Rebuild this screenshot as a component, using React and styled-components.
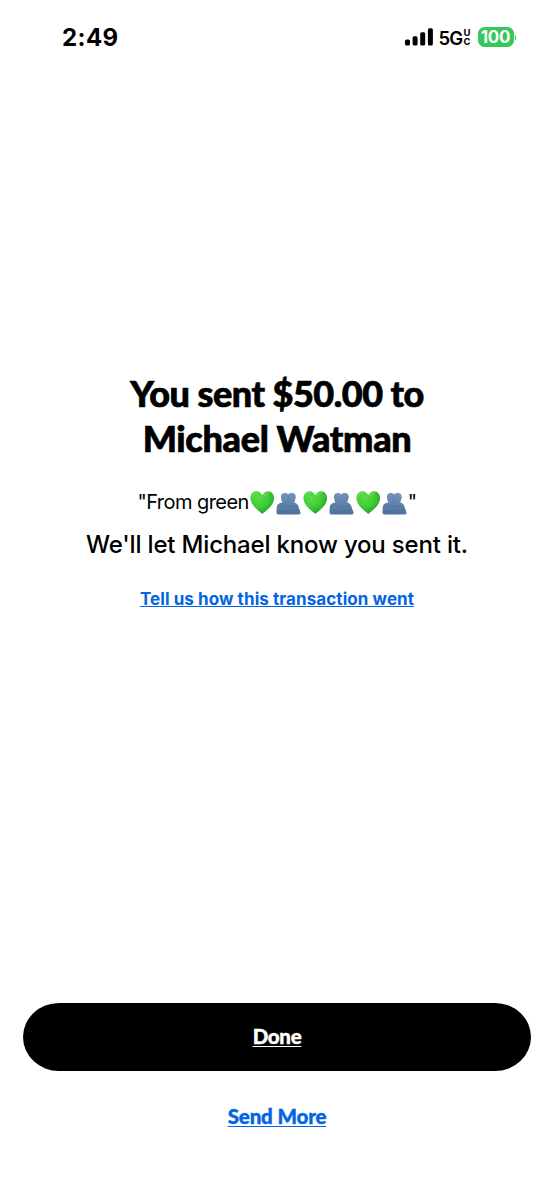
import React from 'react';
import styled, { createGlobalStyle } from 'styled-components';

const GlobalStyle = createGlobalStyle`
  * { box-sizing: border-box; }
  body { margin: 0; background: #fff; }
`;

const sans = `Inter, 'Liberation Sans', sans-serif`;
const display = `Lato, 'Liberation Sans', sans-serif`;

const Screen = styled.div`
  display: flex;
  flex-direction: column;
  width: 554px;
  height: 1199px;
  background: #fff;
  color: #000;
  font-family: ${sans};
  overflow: hidden;
`;

const StatusBar = styled.header`
  display: flex;
  align-items: center;
  justify-content: space-between;
  height: 74px;
  padding: 0 38px 0 62px;
`;

const Clock = styled.time`
  padding-top: 2px;
  font-size: 24px;
  font-weight: 700;
  line-height: 28px;
  letter-spacing: 0.4px;
`;

const Indicators = styled.div`
  display: flex;
  align-items: center;
`;

const Signal = styled.svg`
  display: block;
  margin-right: 6px;
`;

const Network = styled.span`
  width: 25px;
  padding-top: 1px;
  font-size: 18.5px;
  font-weight: 600;
  line-height: 24px;
  letter-spacing: -1px;
`;

const NetworkSuffix = styled.span`
  display: flex;
  flex-direction: column;
  width: 8px;
  margin-right: 6px;
  font-size: 9.5px;
  font-weight: 700;
  line-height: 9px;
`;

const Battery = styled.span`
  width: 36px;
  height: 20px;
  border-radius: 6.5px;
  background: #34c759;
  color: #fff;
  font-size: 17px;
  font-weight: 700;
  line-height: 20px;
  letter-spacing: -0.2px;
  text-align: center;
`;

const BatteryTip = styled.span`
  width: 1.5px;
  height: 5px;
  margin-left: 1px;
  border-radius: 0 2px 2px 0;
  background: #34c759;
`;

const Message = styled.main`
  display: flex;
  flex-direction: column;
  align-items: center;
  padding-top: 297px;
  white-space: nowrap;
`;

const Title = styled.h1`
  display: flex;
  flex-direction: column;
  align-items: center;
  margin: 0;
  font-family: ${display};
  font-size: 36px;
  font-weight: 900;
  line-height: 45px;
  -webkit-text-stroke: 0.7px currentColor;
`;

const TitleLine = styled.span`
  letter-spacing: ${(p) => p.$tracking}px;
`;

const Note = styled.p`
  display: flex;
  align-items: center;
  margin: 27px 0 0;
  font-size: 20px;
  line-height: 28px;
  letter-spacing: -0.55px;
`;

const Emoji = styled.svg`
  display: block;
  flex: none;
`;

const Detail = styled.p`
  margin: 14px 0 0;
  font-size: 24px;
  font-weight: 500;
  line-height: 30px;
  letter-spacing: -0.18px;
`;

const FeedbackLink = styled.a`
  margin-top: 27px;
  color: #0364e4;
  font-size: 17px;
  font-weight: 700;
  line-height: 24px;
  letter-spacing: 0.08px;
  text-decoration: underline;
  text-decoration-thickness: 1px;
  text-underline-offset: 1px;
  text-decoration-skip-ink: none;
`;

const Actions = styled.footer`
  display: flex;
  flex-direction: column;
  align-items: center;
  margin-top: auto;
  padding: 0 23px 67px;
`;

const Action = styled.button`
  border: 0;
  padding: 0;
  background: none;
  color: #0364e4;
  font-family: ${display};
  font-size: 20.5px;
  font-weight: 900;
  line-height: 32px;
  letter-spacing: ${(p) => p.$tracking}px;
  -webkit-text-stroke: 0.4px currentColor;
  text-decoration: underline;
  text-decoration-thickness: 1px;
  text-underline-offset: 2px;
  text-decoration-skip-ink: none;
`;

const PrimaryAction = styled(Action)`
  width: 508px;
  height: 68px;
  margin-bottom: 29px;
  padding-bottom: 2px;
  border-radius: 36px / 34px;
  background: #000;
  color: #fff;
`;

function Heart() {
  return (
    <Emoji width="26.5" height="26" viewBox="0 0 26.5 26" aria-hidden="true">
      <defs>
        <radialGradient id="heart" cx="35%" cy="28%" r="75%">
          <stop offset="0" stopColor="#5fdc4a" />
          <stop offset="0.55" stopColor="#3fcc35" />
          <stop offset="1" stopColor="#20a32a" />
        </radialGradient>
      </defs>
      <path d="M13.3 25C10.4 22.3 1.5 16.8 1.5 9C1.5 5.2 4.1 2.2 7.2 2.2C10.1 2.2 12.3 3.9 13.3 6.2C14.3 3.9 16.6 2.2 19.4 2.2C22.5 2.2 25.1 5.2 25.1 9C25.1 16.8 16.3 22.3 13.3 25Z" fill="url(#heart)" />
      <path d="M3.6 7.3C4.2 4.9 5.8 3.7 7.8 3.8M15.7 6.4C16.6 4.6 18 3.8 19.9 3.8" fill="none" stroke="#9af284" strokeWidth="1.2" strokeLinecap="round" opacity=".5" />
    </Emoji>
  );
}

function Hug() {
  return (
    <Emoji width="26.5" height="26" viewBox="0 0 26.5 26" aria-hidden="true">
      <defs>
        <linearGradient id="hug" x1="0" y1="0" x2="0" y2="1">
          <stop offset="0" stopColor="#7494bb" />
          <stop offset="1" stopColor="#4f719c" />
        </linearGradient>
      </defs>
      <path d="M6 8.5C5.6 5.6 7.2 4 9.6 4C11.3 4 12.4 4.5 13.2 5.4C14.2 4.4 15.5 3.9 17.2 4C19.9 4.2 21.2 6.2 20.6 9C20.2 11 19.8 12.2 19 13.2C21.8 14 23.3 16 23.9 19L25.4 22.9C25.8 24.6 25.1 25.6 23.7 25.6H3.4C2.1 25.6 1.5 24.8 1.5 23.6L1.7 18.4C1.8 15.6 3.9 14.1 7.4 13.6C6.6 12.2 6.1 10.5 6 8.5Z" fill="url(#hug)" />
      <path d="M13.2 5.8C12.8 8.5 12.9 11.3 13.4 14" fill="none" stroke="#54759f" strokeWidth=".7" opacity=".5" />
      <path d="M2.4 17.6C6 15.2 9 16.4 13 17.4C17 18.2 20 17.6 22.8 16.6M3 21.8C9.8 22.6 16 21.7 23.8 20.9" fill="none" stroke="#41628d" strokeWidth=".8" strokeLinecap="round" opacity=".4" />
    </Emoji>
  );
}

export default function App() {
  return (
    <Screen>
      <GlobalStyle />
      <StatusBar>
        <Clock>2:49</Clock>
        <Indicators>
          <Signal width="28" height="18" viewBox="0 0 28 18" aria-hidden="true">
            <rect x="0" y="11.5" width="5" height="6" rx="1.6" />
            <rect x="7.6" y="8.3" width="5" height="9.2" rx="1.6" />
            <rect x="15.2" y="4.2" width="5" height="13.3" rx="1.6" />
            <rect x="22.9" y="0.3" width="5" height="17.2" rx="1.6" />
          </Signal>
          <Network>5G</Network>
          <NetworkSuffix>
            <span>U</span>
            <span>C</span>
          </NetworkSuffix>
          <Battery>100</Battery>
          <BatteryTip />
        </Indicators>
      </StatusBar>
      <Message>
        <Title>
          <TitleLine $tracking={-0.5}>You sent $50.00 to</TitleLine>
          <TitleLine $tracking={-0.32}>Michael Watman</TitleLine>
        </Title>
        <Note>
          <span>"From green</span>
          <Heart /><Hug /><Heart /><Hug /><Heart /><Hug />
          <span>"</span>
        </Note>
        <Detail>We'll let Michael know you sent it.</Detail>
        <FeedbackLink>Tell us how this transaction went</FeedbackLink>
      </Message>
      <Actions>
        <PrimaryAction $tracking={-0.3}>Done</PrimaryAction>
        <Action $tracking={-0.15}>Send More</Action>
      </Actions>
    </Screen>
  );
}
